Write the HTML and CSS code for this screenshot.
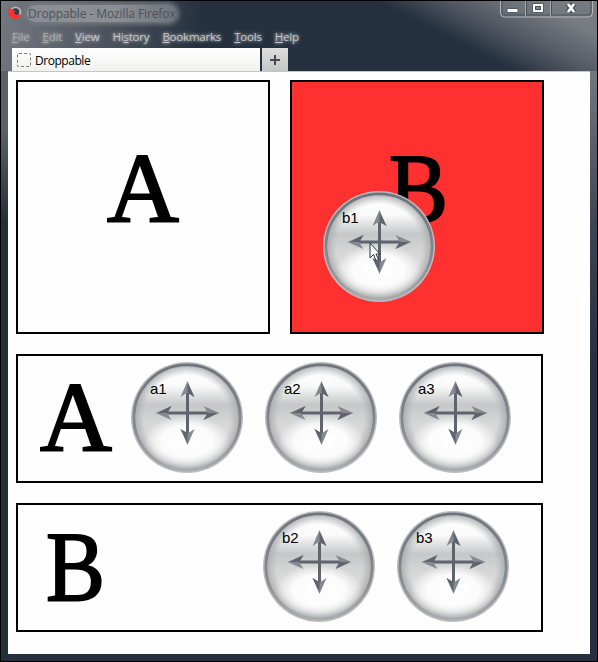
FILE: index.html
```html
<!DOCTYPE html>
<html lang="en">
<head>
<meta charset="utf-8">
<title>Droppable</title>
<link rel="stylesheet" href="styles.css">
</head>
<body>
<svg class="defs" aria-hidden="true">
  <defs>
    <linearGradient id="rim" x1="0" y1="0" x2="0" y2="1">
      <stop offset="0" stop-color="#6f737b"/><stop offset=".6" stop-color="#858990"/><stop offset="1" stop-color="#a9abad"/>
    </linearGradient>
    <linearGradient id="face" x1="0" y1="0" x2="0" y2="1">
      <stop offset="0" stop-color="#ffffff"/><stop offset=".2" stop-color="#fafafa"/><stop offset=".38" stop-color="#c6c7c8"/><stop offset=".56" stop-color="#d6d7d6"/><stop offset="1" stop-color="#e6e6e5"/>
    </linearGradient>
    <radialGradient id="edge">
      <stop offset=".82" stop-color="#b4b6b8" stop-opacity="0"/><stop offset="1" stop-color="#a6a8ab" stop-opacity=".8"/>
    </radialGradient>
    <radialGradient id="glow">
      <stop offset="0" stop-color="#fff"/><stop offset=".6" stop-color="#fff" stop-opacity=".9"/><stop offset="1" stop-color="#fff" stop-opacity="0"/>
    </radialGradient>
    <symbol id="disc" viewBox="0 0 112 112">
      <ellipse cx="56" cy="55.500" rx="56" ry="55.500" fill="#bdbebf"/>
      <ellipse cx="56" cy="55.500" rx="53" ry="52.500" fill="url(#face)" stroke="url(#rim)" stroke-width="3"/>
      <circle cx="56" cy="55.500" r="51.500" fill="url(#edge)"/>
      <ellipse cx="56" cy="79" rx="43" ry="26" fill="url(#glow)"/>
      <g fill="#5f636d">
        <path d="M55 31h3v42h-3zM34 49.500h44v3H34z"/>
        <g id="head"><path d="M56.500 19l7 16-7-4.500-7 4.500z" fill="#858990"/><path d="M56.500 21v10l7 4z"/></g>
        <use href="#head" transform="rotate(90 56.500 51)"/>
        <use href="#head" transform="rotate(180 56.500 51)"/>
        <use href="#head" transform="rotate(270 56.500 51)"/>
      </g>
    </symbol>
  </defs>
</svg>
<div class="window">
  <header class="titlebar">
    <svg class="logo" viewBox="0 0 14 14"><circle cx="7.500" cy="6.500" r="6" fill="#b4b5b6"/><circle cx="7.500" cy="6" r="3.800" fill="#303d4b"/><path d="M1 2C-1 9 3 14 8 13c3-.4 5-2 5-5-3 2-7 1-7-2l2-1-3-1z" fill="#ff3030"/></svg>
    <span class="title">Droppable - Mozilla Firefox</span>
    <svg class="controls" viewBox="0 0 96 18" aria-label="Window controls">
      <path d="M1.500 0v12q0 4 4 4h84q4 0 4-4V0" fill="#747982" fill-opacity=".35" stroke="#b4b5b7"/>
      <path d="M3 0v11q0 3 3 3h83q3 0 3-3V0M27.500 0v14M52.500 0v14" fill="none" stroke="#4b525d"/>
      <path d="M26.500 0v15M51.500 0v15" stroke="#a6a9ad"/>
      <path d="M8 7.500h11v4H8z" fill="#fff" stroke="#555c67"/>
      <path d="M33.500 2.500h11v9h-11z" fill="#fff" stroke="#555c67"/><path d="M36.500 5.500h5v3h-5z" fill="#858a91" stroke="#404751"/>
      <path d="M69 3l6 8M75 3l-6 8" stroke="#3d4550" stroke-width="5"/><path d="M69 3l6 8M75 3l-6 8" stroke="#fff" stroke-width="2.800"/>
    </svg>
  </header>
  <nav class="menu">
    <span class="faded"><u>F</u>ile</span><span class="faded"><u>E</u>dit</span><span><u>V</u>iew</span><span>Hi<u>s</u>tory</span><span><u>B</u>ookmarks</span><span><u>T</u>ools</span><span><u>H</u>elp</span>
  </nav>
  <div class="tabs">
    <div class="tab"><i class="favicon"></i><span>Droppable</span></div>
    <div class="newtab"></div>
  </div>
  <main class="page">
    <section class="targets">
      <div class="target"><span class="letter">A</span></div>
      <div class="target over"><span class="letter narrow">B</span>
        <div class="drag dragging"><svg><use href="#disc"/></svg><span>b1</span>
          <svg class="cursor" viewBox="0 0 12 20"><path d="M1 1v15l3.500-3.500L7 18.500l2.500-1L7 12h4z" fill="#fff" stroke="#26303c"/></svg>
        </div>
      </div>
    </section>
    <section class="source row-a"><span class="letter">A</span>
      <div class="drag"><svg><use href="#disc"/></svg><span>a1</span></div>
      <div class="drag"><svg><use href="#disc"/></svg><span>a2</span></div>
      <div class="drag"><svg><use href="#disc"/></svg><span>a3</span></div>
    </section>
    <section class="source row-b"><span class="letter narrow">B</span>
      <div class="drag"><svg><use href="#disc"/></svg><span>b2</span></div>
      <div class="drag"><svg><use href="#disc"/></svg><span>b3</span></div>
    </section>
  </main>
</div>
</body>
</html>
```
FILE: styles.css
```css
* { box-sizing: border-box; }
body { margin: 0; }
.defs { position: absolute; width: 0; height: 0; }
.window {
  width: 598px; height: 662px; padding: 0 7px 7px;
  border: 1px solid #000;
  background:
    linear-gradient(to bottom, #5b606a 0, #5b606a 60px, #24303e 150px) 0 70px / 7px 590px no-repeat,
    linear-gradient(to bottom, #747880 0, #3d4652 150px, #24303e 300px) 100% 70px / 7px 590px no-repeat,
    linear-gradient(27deg, transparent 70%, #535963 80%, #777b82 91%) 0 0 / 100% 71px no-repeat,
    linear-gradient(100deg, #747880 0, #575c66 14%, #24303e 34%) 0 0 / 100% 71px no-repeat,
    #24303e;
  font-family: "Open Sans", "Noto Sans", sans-serif;
  font-size: 12px;
}
.titlebar { display: flex; height: 26px; }
.logo { width: 14px; height: 14px; margin-top: 5px; }
.title {
  align-self: flex-start; margin: 4px 0 0 5px; padding: 0 1px; line-height: 17px;
  color: #4c535e; background: linear-gradient(90deg, #8b8e93 60%, #6f747c); border-radius: 9px;
  box-shadow: 0 0 5px 2px #7b7f86; letter-spacing: -.1px; white-space: nowrap;
}
.controls { width: 96px; height: 18px; margin-left: auto; margin-right: -5px; }
.menu { display: flex; height: 21px; padding: 0 0 0 4px; gap: 13px; font-size: 11.500px; color: #c4c5c7; }
.menu span { height: 16px; line-height: 20px; letter-spacing: -.2px; text-shadow: 0 0 3px #a3a5a8, 0 0 5px #999ca0; }
.menu .faded { color: #a9abad; }
.tabs { display: flex; height: 23px; padding-left: 4px; gap: 2px; }
.tab { display: flex; align-items: center; width: 248px; padding: 2px 0 0 5px; gap: 4px; background: linear-gradient(#fff, #f1f1f0); color: #000; letter-spacing: -.45px; }
.favicon { width: 14px; height: 14px; margin-top: -2px; border: 1px dashed #777; border-radius: 2px; }
.newtab {
  width: 26px;
  background:
    linear-gradient(#444b56, #444b56) center / 10px 2px no-repeat,
    linear-gradient(#444b56, #444b56) center / 2px 10px no-repeat,
    linear-gradient(#dededc, #c5c6c6);
}
.page { height: 583px; padding: 8px; background: #fefefe; border-top: 1px solid #c4c5c7; }
.targets { display: flex; gap: 20px; margin-bottom: 20px; }
.target { position: relative; width: 254px; height: 254px; padding-top: 62px; border: 2px solid #000; text-align: center; }
.over { padding-left: 3px; background: #ff3030; }
.letter { display: block; font: 99.500px/90px "Liberation Serif", serif; color: #000; -webkit-text-stroke: 2px #000; }
.narrow { transform: scaleX(.89); }
.source { display: flex; width: 527px; height: 129px; border: 2px solid #000; margin-bottom: 20px; gap: 22px; padding: 6px 0 0 22px; }
.source .letter { width: 69px; flex: none; margin-top: 11px; }
.row-b { padding-left: 28px; }
.row-b .letter { width: 195px; transform-origin: 0 50%; }
.drag { position: relative; flex: none; width: 112px; height: 112px; }
.drag > svg:first-child { display: block; width: 112px; height: 112px; }
.drag span { position: absolute; left: 19px; top: 18px; font: 15px/18px "Liberation Sans", sans-serif; color: #000; }
.dragging { position: absolute; left: 31px; top: 109px; text-align: left; }
.drag .cursor { position: absolute; left: 46px; top: 51px; width: 12px; height: 20px; }
```
